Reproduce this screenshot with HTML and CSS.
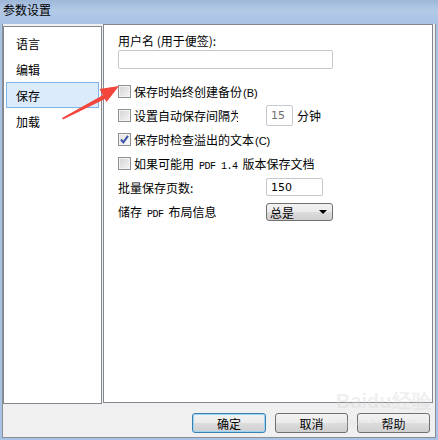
FILE: index.html
```html
<!DOCTYPE html>
<html>
<head>
<meta charset="utf-8">
<link rel="stylesheet" href="styles.css">
<title>参数设置</title>
</head>
<body>
<div class="titlebar">参数设置</div>
<div class="window">
  <div class="panes">
    <div class="nav">
      <div class="nav-item">语言</div>
      <div class="nav-item">编辑</div>
      <div class="nav-item selected">保存</div>
      <div class="nav-item">加载</div>
    </div>
    <div class="content">
      <div class="label">用户名 (用于便签):</div>
      <div class="textbox wide"></div>
      <div class="rows">
        <div class="row"><span class="check"></span><span class="txt">保存时始终创建备份<span class="lat">(B)</span></span></div>
        <div class="row"><span class="check"></span><span class="txt clip">设置自动保存间隔为</span><span class="textbox small num">15</span><span class="txt unit">分钟</span></div>
        <div class="row"><span class="check on"><svg width="11" height="11" viewBox="0 0 11 11"><path d="M2 5.5 L4.3 8.3 L9 1.8" fill="none" stroke="#3d55a6" stroke-width="2"/></svg></span><span class="txt">保存时检查溢出的文本<span class="lat">(C)</span></span></div>
        <div class="row"><span class="check"></span><span class="txt">如果可能用<span class="mono">PDF 1.4</span>版本保存文档</span></div>
        <div class="row"><span class="txt field-label">批量保存页数:</span><span class="textbox mid num dark">150</span></div>
        <div class="row"><span class="txt field-label">储存<span class="mono">PDF</span>布局信息</span><span class="select"><span>总是</span><span class="caret"></span></span></div>
      </div>
    </div>
  </div>
  <div class="footer">
    <button class="btn default">确定</button>
    <button class="btn">取消</button>
    <button class="btn">帮助</button>
  </div>
</div>
<div class="watermark">Baidu经验<br><span>jingyan.baidu.com</span></div>
<svg class="arrow" width="438" height="440" viewBox="0 0 438 440">
  <polygon points="62,118 104,94.5 106,98.5 63,119.5" fill="#f2463c"/>
  <polygon points="119,86 99.5,89 106.5,102" fill="#f2463c"/>
</svg>
</body>
</html>
```
FILE: styles.css
```css
body{
margin:0;
width:438px;
height:440px;
overflow:hidden;
position:relative;
font-family:"Noto Sans CJK SC","Liberation Sans",sans-serif;
font-size:12px;
color:#000;
background:linear-gradient(180deg,#9fb8d8 0px,#b3cae6 10px,#a9c3e6 24px);
}
.titlebar{
height:24px;
line-height:20px;
padding-left:3px;
font-size:12px;
}
.window{
margin-left:2px;
width:432px;
height:413px;
background:#f0f0f0;
border-left:1px solid #8a8d92;
border-right:1px solid #8a8d92;
border-bottom:1px solid #8a8d92;
}
.panes{
display:flex;
align-items:flex-start;
}
.nav{
width:97px;
height:373px;
margin-top:2px;
border:1px solid #828790;
background:#fff;
padding-top:3px;
box-sizing:content-box;
}
.nav-item{
height:26px;
line-height:26px;
margin:0 2px;
padding-left:9px;
box-sizing:border-box;
border:1px solid transparent;
}
.nav-item.selected{
background:#dcebfc;
border-color:#7eb4ea;
}
.content{
margin-left:1px;
width:330px;
height:379px;
border:1px solid #828790;
background:#fff;
padding:9px 0 0 14px;
box-sizing:border-box;
}
.label{
height:14px;
line-height:14px;
}
.textbox{
box-sizing:border-box;
border:1px solid #c5c9cf;
border-radius:2px;
background:#fff;
}
.textbox.wide{
margin-top:2px;
width:215px;
height:19px;
}
.rows{
margin-top:10px;
}
.row{
height:24px;
display:flex;
align-items:center;
}
.check{
width:13px;
height:13px;
box-sizing:border-box;
border:1px solid #8e8f8f;
background:linear-gradient(135deg,#d2d2d2,#f6f6f6);
box-shadow:inset 0 0 0 1px #f4f4f4;
margin-right:3px;
display:flex;
align-items:center;
justify-content:center;
}
.check.on{
background:linear-gradient(135deg,#e2e2e2,#fafafa);
}
.txt{
white-space:nowrap;
}
.lat{
font-family:"Liberation Sans",sans-serif;
font-size:11px;
margin-left:1px;
}
.mono{
font-family:"Liberation Mono",monospace;
font-size:10px;
letter-spacing:-0.5px;
margin:0 5px;
}
.clip{
width:104px;
overflow:hidden;
}
.textbox.small{
margin-left:28px;
width:27px;
height:21px;
}
.num{
display:flex;
align-items:center;
padding-left:4px;
font-family:"DejaVu Sans","Liberation Sans",sans-serif;
font-size:11px;
color:#6d6d6d;
}
.num.dark{
color:#000;
}
.unit{
margin-left:4px;
}
.field-label{
width:148px;
}
.textbox.mid{
width:57px;
height:18px;
}
.select{
width:67px;
height:18px;
box-sizing:border-box;
border:1px solid #707070;
border-radius:3px;
background:linear-gradient(180deg,#f2f2f2,#ebebeb 50%,#dddddd 51%,#cfcfcf);
display:flex;
align-items:center;
justify-content:space-between;
padding:0 5px 0 3px;
margin-top:2px;
}
.caret{
width:0;
height:0;
border-left:4px solid transparent;
border-right:4px solid transparent;
border-top:4px solid #000;
}
.footer{
display:flex;
justify-content:flex-end;
gap:9px;
padding:9px 5px 0 0;
}
.btn{
width:73px;
height:20px;
padding:0;
font-family:"Noto Sans CJK SC","Liberation Sans",sans-serif;
font-size:12px;
color:#000;
border:1px solid #707070;
border-radius:3px;
background:linear-gradient(180deg,#f2f2f2,#ebebeb 50%,#dddddd 51%,#cfcfcf);
}
.btn.default{
width:74px;
border-color:#3c7fb1;
box-shadow:inset 0 0 0 1px #9ad4f5;
}
.watermark{
position:absolute;
left:336px;
top:392px;
color:rgba(215,215,215,0.4);
font-family:"Liberation Sans",sans-serif;
font-size:20px;
font-weight:bold;
line-height:18px;
}
.watermark span{
font-size:10px;
font-weight:normal;
}
.arrow{
position:absolute;
left:0;
top:0;
}
```
